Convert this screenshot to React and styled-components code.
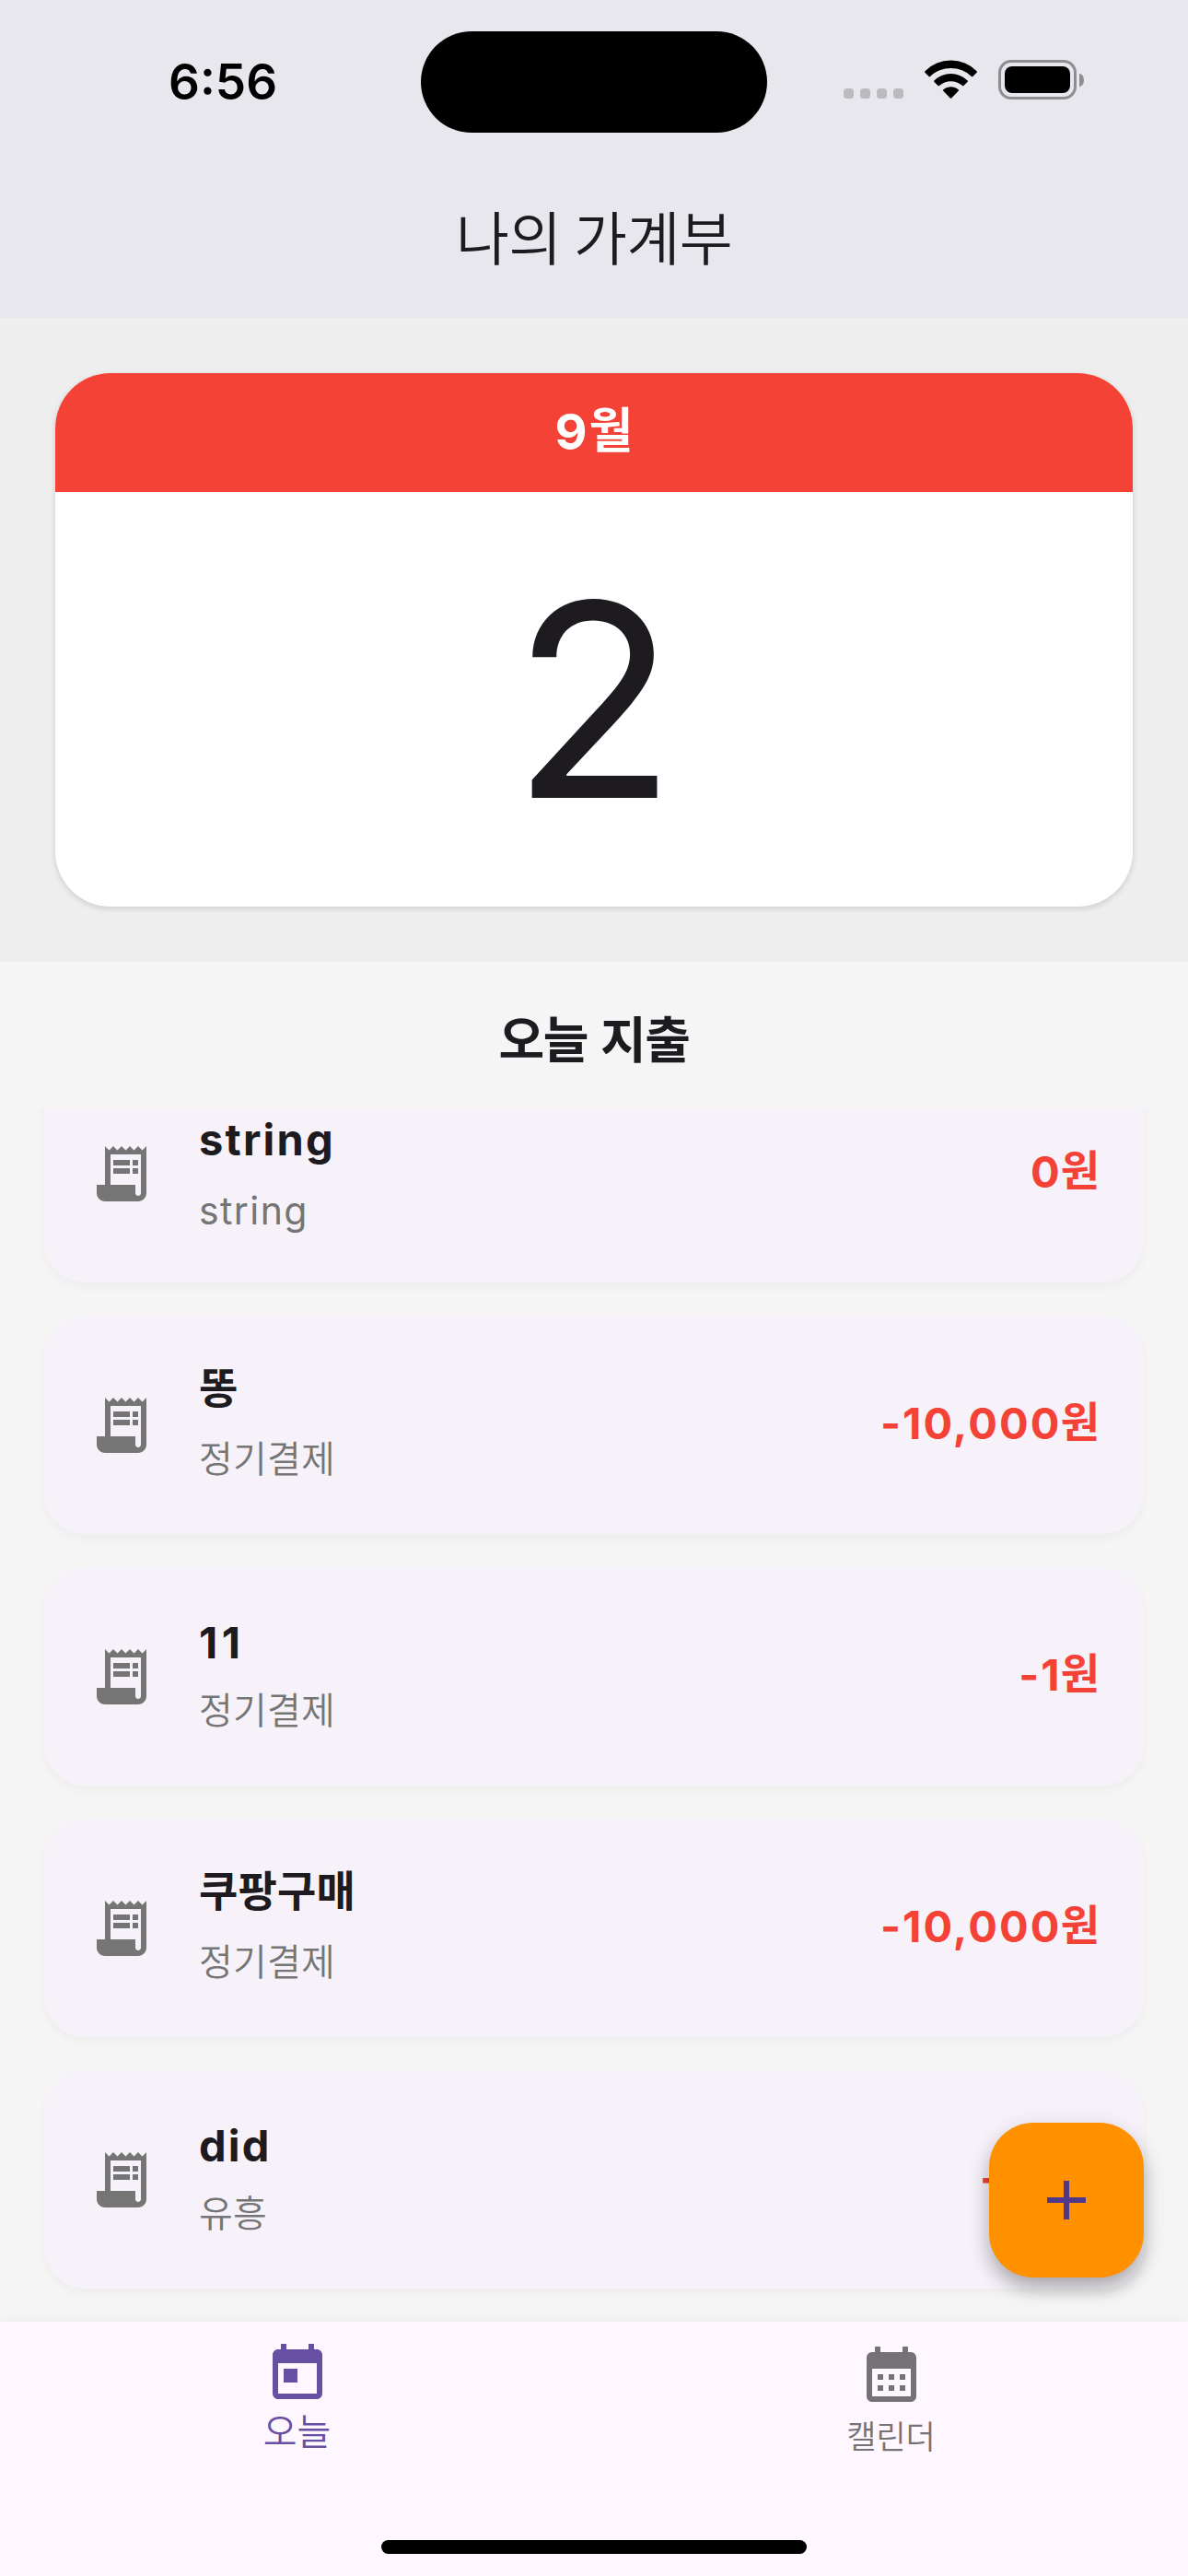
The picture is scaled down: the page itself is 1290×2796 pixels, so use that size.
import React from "react";
import styled, { createGlobalStyle, css } from "styled-components";

const GlobalStyle = createGlobalStyle`
  *, *::before, *::after { box-sizing: border-box; }
  html, body { margin: 0; padding: 0; }
  body {
    font-family: Inter, "Noto Sans CJK KR", sans-serif;
    color: #1d1b20;
    background: #f5f5f5;
  }
`;

const hangulFont = css`
  font-family: "Noto Sans CJK KR", sans-serif;
`;

const Screen = styled.div`
  position: relative;
  width: 1290px;
  height: 2796px;
  display: flex;
  flex-direction: column;
  overflow: hidden;
`;

const Header = styled.header`
  flex: none;
  height: 345px;
  background: #e8e7ee;
`;

const StatusBar = styled.div`
  height: 177px;
  padding-top: 33px;
  display: grid;
  grid-template-columns: 457px 376px 1fr;
  align-items: start;
`;

const Clock = styled.div`
  height: 111px;
  padding-left: 183px;
  line-height: 112px;
  font-size: 53px;
  font-weight: 600;
  letter-spacing: 0;
  color: #000;
`;

const Island = styled.div`
  height: 110px;
  margin-top: 1px;
  border-radius: 55px;
  background: #000;
`;

const StatusIcons = styled.div`
  height: 75px;
  padding-left: 83px;
  display: flex;
  align-items: flex-end;
`;

const SignalDots = styled.div`
  display: flex;
  gap: 7px;
  margin-right: 23px;
  padding-bottom: 1px;
`;

const Dot = styled.i`
  width: 11px;
  height: 11px;
  border-radius: 3.5px;
  background: #bbbabf;
`;

const WifiSvg = styled.svg`
  width: 57px;
  height: 42px;
  margin: 0 23px 1px 0;
  fill: #000;
`;

const Battery = styled.div`
  display: flex;
  align-items: center;
  gap: 3px;
`;

const BatteryShell = styled.div`
  width: 85px;
  height: 43px;
  padding: 4px;
  border: 3px solid #8e8d92;
  border-radius: 14px;
`;

const BatteryLevel = styled.div`
  height: 100%;
  border-radius: 8px;
  background: #000;
`;

const BatteryTip = styled.div`
  width: 5px;
  height: 14px;
  border-radius: 0 5px 5px 0 / 0 7px 7px 0;
  background: #8e8d92;
`;

const AppTitle = styled.h1`
  ${hangulFont}
  margin: 0;
  height: 168px;
  line-height: 156px;
  text-align: center;
  font-size: 63px;
  font-weight: 350;
  letter-spacing: -0.6px;
`;

const DateSection = styled.section`
  flex: none;
  height: 699px;
  padding: 60px;
  background: #eee;
`;

const DateCard = styled.div`
  height: 579px;
  border-radius: 60px;
  overflow: hidden;
  display: flex;
  flex-direction: column;
  background: #fff;
  box-shadow: 0 3px 6px rgba(0, 0, 0, 0.09), 0 1px 8px rgba(0, 0, 0, 0.05);
`;

const Month = styled.div`
  flex: none;
  height: 129px;
  line-height: 122px;
  text-align: center;
  font-size: 54px;
  font-weight: 700;
  color: #fff;
  background: #f44336;
`;

const MonthUnit = styled.span`
  ${hangulFont}
  position: relative;
  top: -2px;
  margin-left: 2px;
  font-size: 52px;
`;

const Day = styled.div`
  height: 450px;
  text-align: center;
  line-height: 452px;
  font-size: 293px;
  font-weight: 420;
`;

const SectionTitle = styled.h2`
  ${hangulFont}
  flex: none;
  margin: 0;
  height: 159px;
  line-height: 163px;
  text-align: center;
  font-size: 54px;
  font-weight: 600;
  letter-spacing: -1.4px;
  word-spacing: 3px;
`;

const ListViewport = styled.main`
  flex: none;
  height: 1317px;
  padding: 0 48px 36px;
  overflow: hidden;
  display: flex;
  flex-direction: column;
  justify-content: flex-end;
  gap: 36px;
`;

const ExpenseCard = styled.article`
  flex: none;
  height: 237px;
  padding: 0 48px;
  border-radius: 45px;
  display: flex;
  align-items: center;
  gap: 48px;
  background: #f7f2fa;
  box-shadow: 0 6px 12px rgba(0, 0, 0, 0.028), 0 2px 16px rgba(0, 0, 0, 0.012);
`;

const Glyph = styled.svg`
  flex: none;
  width: 72px;
  height: 72px;
  fill: ${(p) => p.$color};
`;

const Labels = styled.div`
  flex: 1;
  display: flex;
  flex-direction: column;
  gap: 20px;
`;

const Name = styled.div`
  height: 60px;
  line-height: 60px;
  font-size: 47px;
  font-weight: 700;
  letter-spacing: ${(p) => (p.$numeric ? 4.5 : 2.2)}px;
  ${(p) =>
    p.$hangul &&
    css`
      ${hangulFont}
      line-height: 47px;
      font-size: 46px;
      letter-spacing: 0.2px;
    `}
`;

const Category = styled.div`
  height: 54px;
  line-height: 54px;
  font-size: 41px;
  letter-spacing: 1.4px;
  color: #757575;
  ${(p) =>
    p.$hangul &&
    css`
      ${hangulFont}
      line-height: 42px;
      font-size: 40px;
      font-weight: 350;
      letter-spacing: 0.2px;
    `}
`;

const Amount = styled.div`
  height: 60px;
  line-height: 51px;
  white-space: nowrap;
  font-size: 47px;
  font-weight: 650;
  letter-spacing: 2.1px;
  color: #f44336;
`;

const Won = styled.span`
  ${hangulFont}
  position: relative;
  top: -2px;
  margin-left: -1px;
  font-size: 46px;
  font-weight: 700;
  letter-spacing: 0;
`;

const NavBar = styled.nav`
  flex: none;
  position: relative;
  height: 276px;
  display: grid;
  grid-template-columns: 1fr 1fr;
  align-items: start;
  background: #fef7ff;
  box-shadow: 0 -2px 14px rgba(0, 0, 0, 0.035);
`;

const NavItem = styled.div`
  padding-top: 21px;
  display: flex;
  flex-direction: column;
  align-items: center;
`;

const NavLabel = styled.span`
  ${hangulFont}
  line-height: ${(p) => (p.$active ? 49 : 59)}px;
  font-size: ${(p) => (p.$active ? 40 : 35)}px;
  font-weight: 350;
  color: ${(p) => p.$color};
`;

const HomeIndicator = styled.div`
  position: absolute;
  left: 414px;
  bottom: 24px;
  width: 462px;
  height: 15px;
  border-radius: 8px;
  background: #000;
`;

const AddButton = styled.button`
  position: absolute;
  right: 48px;
  bottom: 324px;
  width: 168px;
  height: 168px;
  padding: 0;
  border: 0;
  border-radius: 48px;
  display: flex;
  align-items: center;
  justify-content: center;
  background: #ff9100;
  box-shadow: 0 12px 20px -3px rgba(0, 0, 0, 0.2), 0 12px 26px rgba(0, 0, 0, 0.13),
    0 3px 30px rgba(0, 0, 0, 0.06);
`;

const RECEIPT =
  "M19.5 3.5 18 2l-1.5 1.5L15 2l-1.5 1.5L12 2l-1.5 1.5L9 2 7.5 3.5 6 2v14H3v3c0 1.66 1.34 3 3 3h12c1.66 0 3-1.34 3-3V2l-1.5 1.5zM19 19c0 .55-.45 1-1 1s-1-.45-1-1v-3H8V5h11v14zM9 7h6v2H9zM16 7h2v2h-2zM9 10h6v2H9zM16 10h2v2h-2z";
const TODAY =
  "M19 3h-1V1h-2v2H8V1H6v2H5c-1.11 0-1.99.9-1.99 2L3 19c0 1.1.89 2 2 2h14c1.1 0 2-.9 2-2V5c0-1.1-.9-2-2-2zm0 16H5V8h14v11zM7 10h5v5H7z";
const CALENDAR =
  "M19 4h-1V2h-2v2H8V2H6v2H5c-1.11 0-1.99.9-1.99 2L3 20c0 1.1.89 2 2 2h14c1.1 0 2-.9 2-2V6c0-1.1-.9-2-2-2zm0 16H5V10h14v10zM9 14H7v-2h2v2zm4 0h-2v-2h2v2zm4 0h-2v-2h2v2zm-8 4H7v-2h2v2zm4 0h-2v-2h2v2zm4 0h-2v-2h2v2z";
const PLUS = "M19 13h-6v6h-2v-6H5v-2h6V5h2v6h6v2z";

const Icon = ({ path, color }) => (
  <Glyph viewBox="0 0 24 24" $color={color}>
    <path fillRule="evenodd" d={path} />
  </Glyph>
);

const expenses = [
  { name: "string", category: "string", amount: "0" },
  { name: "똥", category: "정기결제", amount: "-10,000" },
  { name: "11", category: "정기결제", amount: "-1" },
  { name: "쿠팡구매", category: "정기결제", amount: "-10,000" },
  { name: "did", category: "유흥", amount: "-20" },
];

const tabs = [
  { label: "오늘", path: TODAY, active: true },
  { label: "캘린더", path: CALENDAR, active: false },
];

const isHangul = (text) => /[가-힣]/.test(text);
const isNumeric = (text) => /^\d+$/.test(text);

export default function App() {
  return (
    <Screen>
      <GlobalStyle />
      <Header>
        <StatusBar>
          <Clock>6:56</Clock>
          <Island />
          <StatusIcons>
            <SignalDots>
              <Dot />
              <Dot />
              <Dot />
              <Dot />
            </SignalDots>
            <WifiSvg viewBox="0 0 57 42">
              <path d="M.4 12.2A39.5 39.5 0 0 1 56.6 12.2Q57.3 13 56.6 13.7L52.4 18Q51.7 18.6 51 18A32.5 32.5 0 0 0 6 18Q5.3 18.6 4.6 18L.4 13.7Q-.3 13 .4 12.2Z" />
              <path d="M10.3 22.4A26 26 0 0 1 46.7 22.4Q47.4 23.1 46.7 23.8L42.4 28.1Q41.7 28.7 41 28.1A18.5 18.5 0 0 0 16 28.1Q15.3 28.7 14.6 28.1L10.3 23.8Q9.6 23.1 10.3 22.4Z" />
              <path d="M20.3 32.3A12.2 12.2 0 0 1 36.7 32.3Q37.4 33 36.7 33.7L29.2 41.4Q28.5 42 27.8 41.4L20.3 33.7Q19.6 33 20.3 32.3Z" />
            </WifiSvg>
            <Battery>
              <BatteryShell>
                <BatteryLevel />
              </BatteryShell>
              <BatteryTip />
            </Battery>
          </StatusIcons>
        </StatusBar>
        <AppTitle>나의 가계부</AppTitle>
      </Header>

      <DateSection>
        <DateCard>
          <Month>
            9<MonthUnit>월</MonthUnit>
          </Month>
          <Day>2</Day>
        </DateCard>
      </DateSection>

      <SectionTitle>오늘 지출</SectionTitle>

      <ListViewport>
        {expenses.map((item, index) => (
          <ExpenseCard key={index}>
            <Icon path={RECEIPT} color="#757575" />
            <Labels>
              <Name $hangul={isHangul(item.name)} $numeric={isNumeric(item.name)}>
                {item.name}
              </Name>
              <Category $hangul={isHangul(item.category)}>{item.category}</Category>
            </Labels>
            <Amount>
              {item.amount}
              <Won>원</Won>
            </Amount>
          </ExpenseCard>
        ))}
      </ListViewport>

      <NavBar>
        {tabs.map((tab) => {
          const color = tab.active ? "#6750a4" : "#757275";
          return (
            <NavItem key={tab.label}>
              <Icon path={tab.path} color={color} />
              <NavLabel $active={tab.active} $color={color}>
                {tab.label}
              </NavLabel>
            </NavItem>
          );
        })}
        <HomeIndicator />
      </NavBar>

      <AddButton aria-label="추가">
        <Icon path={PLUS} color="#4f378a" />
      </AddButton>
    </Screen>
  );
}
